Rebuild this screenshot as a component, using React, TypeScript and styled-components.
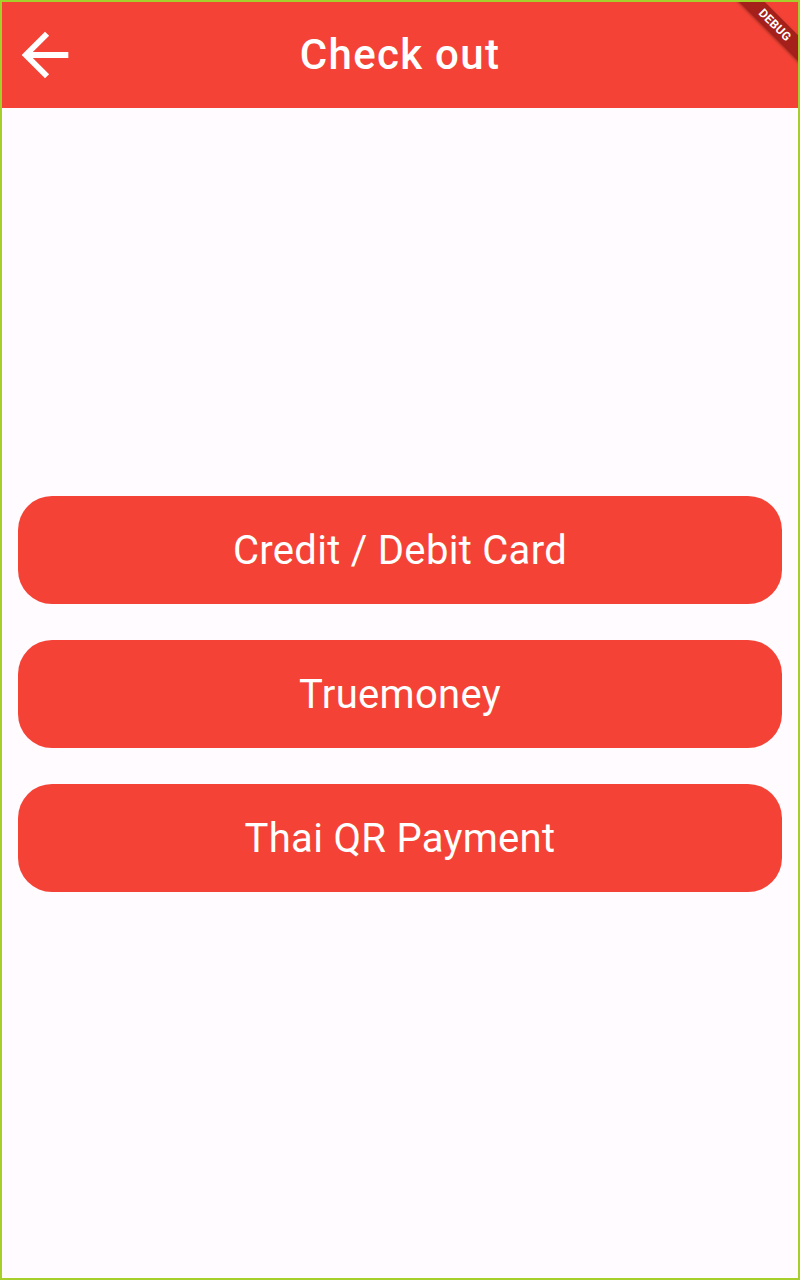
import React from "react";
import styled, { createGlobalStyle } from "styled-components";

const Global = createGlobalStyle`
  html, body { margin: 0; padding: 0; }
  body { font-family: Roboto, "Noto Sans", sans-serif; background: #fffbfe; }
  * { box-sizing: border-box; }
`;

const Frame = styled.div`
  position: relative;
  width: 800px;
  height: 1280px;
  border: 2px solid #a6cf2c;
  background: #fffbfe;
  display: flex;
  flex-direction: column;
  overflow: hidden;
`;

const AppBar = styled.header`
  height: 106px;
  flex: none;
  background: #f44336;
  display: grid;
  grid-template-columns: 96px 1fr 96px;
  align-items: center;
`;

const BackButton = styled.button`
  border: 0;
  background: transparent;
  padding: 0 0 0 8px;
  display: flex;
  align-items: center;
  cursor: pointer;
`;

const Title = styled.h1`
  margin: 0 0 2px;
  text-align: center;
  color: #ffffff;
  font-family: Roboto, sans-serif;
  font-weight: 500;
  font-size: 42px;
  letter-spacing: 1.3px;
`;

const Body = styled.main`
  flex: 1;
  display: flex;
  flex-direction: column;
  justify-content: center;
  gap: 36px;
  padding: 2px 16px 0;
`;

const PayButton = styled.button`
  height: 108px;
  border: 0;
  border-radius: 34px;
  background: #f44336;
  color: #ffffff;
  font-family: Roboto, sans-serif;
  font-size: 40px;
  font-weight: 400;
  letter-spacing: 0.3px;
  cursor: pointer;
`;

const Ribbon = styled.div`
  position: absolute;
  top: 14px;
  right: -42px;
  width: 130px;
  height: 18px;
  background: #a5201a;
  color: #fff;
  font-family: Roboto, sans-serif;
  font-weight: 700;
  font-size: 12px;
  line-height: 18px;
  text-align: center;
  transform: rotate(45deg);
  letter-spacing: 0.3px;
  box-shadow: 0 1px 3px rgba(0,0,0,0.35);
`;

export default function App() {
  return (
    <>
      <Global />
      <Frame>
        <AppBar>
          <BackButton aria-label="back">
            <svg width="70" height="70" viewBox="0 0 24 24" fill="#ffffff">
              <path d="M20 11H7.83l5.59-5.59L12 4l-8 8 8 8 1.41-1.41L7.83 13H20v-2z" />
            </svg>
          </BackButton>
          <Title>Check out</Title>
          <div />
        </AppBar>
        <Body>
          <PayButton>Credit / Debit Card</PayButton>
          <PayButton>Truemoney</PayButton>
          <PayButton>Thai QR Payment</PayButton>
        </Body>
        <Ribbon>DEBUG</Ribbon>
      </Frame>
    </>
  );
}
